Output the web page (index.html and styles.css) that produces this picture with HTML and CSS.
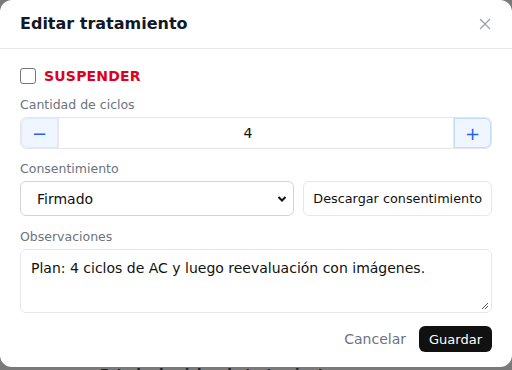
FILE: index.html
```html
<!DOCTYPE html>
<html lang="es">
<head>
<meta charset="utf-8">
<title>Editar tratamiento</title>
<link rel="stylesheet" href="styles.css">
</head>
<body>
<div class="modal">
  <div class="modal-header">
    <h2 class="modal-title">Editar tratamiento</h2>
    <button class="close" aria-label="Cerrar">
      <svg width="12" height="12" viewBox="0 0 12 12"><path d="M1.5 1.5 L10.5 10.5 M10.5 1.5 L1.5 10.5" stroke="#9ca3af" stroke-width="1.4" stroke-linecap="round"/></svg>
    </button>
  </div>
  <div class="modal-body">
    <label class="check-row">
      <span class="checkbox"></span>
      <span class="check-label">SUSPENDER</span>
    </label>
    <div class="field">
      <div class="label">Cantidad de ciclos</div>
      <div class="stepper">
        <button class="step minus">−</button>
        <div class="step-value">4</div>
        <button class="step plus">+</button>
      </div>
    </div>
    <div class="field">
      <div class="label">Consentimiento</div>
      <div class="row">
        <div class="select">
          <span>Firmado</span>
          <svg width="10" height="8" viewBox="0 0 10 8"><path d="M1.5 2 L5 5.5 L8.5 2" stroke="#111" stroke-width="2" fill="none"/></svg>
        </div>
        <button class="btn-outline">Descargar consentimiento</button>
      </div>
    </div>
    <div class="field obs">
      <div class="label">Observaciones</div>
      <div class="textarea">
        Plan: 4 ciclos de AC y luego reevaluación con imágenes.
        <svg class="grip" width="8" height="8" viewBox="0 0 8 8"><path d="M7 1 L1 7 M7 4 L4 7" stroke="#555" stroke-width="1"/></svg>
      </div>
    </div>
    <div class="footer">
      <button class="btn-link">Cancelar</button>
      <button class="btn-dark">Guardar</button>
    </div>
  </div>
</div>
<div class="behind">Estado de ciclos de tratamiento</div>
</body>
</html>
```
FILE: styles.css
```css
* { box-sizing: border-box; }
html, body { margin: 0; padding: 0; }
body {
  background: #7a7a7a;
  font-family: "DejaVu Sans", "Noto Sans", sans-serif;
  color: #111827;
  height: 370px;
  overflow: hidden;
}
.modal {
  background: #fff;
  border-radius: 12px;
  height: 367px;
  width: 512px;
}
.modal-header {
  height: 49px;
  border-bottom: 1px solid #e5e7eb;
  display: flex;
  align-items: center;
  justify-content: space-between;
  padding: 0 21px 2px 20px;
}
.modal-title {
  margin: 0;
  font-size: 16px;
  font-weight: bold;
  color: #111827;
}
.close {
  border: none;
  background: none;
  padding: 0;
  display: flex;
  margin-top: 2px;
}
.modal-body {
  padding: 17px 20px 0 20px;
}
.check-row {
  display: flex;
  align-items: center;
  gap: 8px;
  height: 19px;
}
.checkbox {
  width: 16px;
  height: 16px;
  border: 1.5px solid #767676;
  border-radius: 3px;
  background: #fff;
}
.check-label {
  color: #e0001b;
  font-weight: bold;
  font-size: 14px;
  letter-spacing: 0.2px;
}
.field { margin-top: 11px; }
.field.obs { margin-top: 12px; }
.label {
  font-size: 12.5px;
  color: #6b7280;
  line-height: 17px;
  margin-bottom: 4px;
}
.stepper {
  display: flex;
  height: 32px;
  border: 1px solid #e5e7eb;
  border-radius: 6px;
  overflow: hidden;
}
.step {
  width: 38px;
  border: none;
  background: #eff6ff;
  color: #2563eb;
  font-size: 18px;
  font-family: "DejaVu Sans", sans-serif;
  padding: 0;
}
.minus { border-right: 1px solid #e5e7eb; border-radius: 6px 0 0 6px; box-shadow: inset 0 0 0 1px #dbeafe; }
.plus { border-left: 1px solid #e5e7eb; border-radius: 0 6px 6px 0; box-shadow: inset 0 0 0 1px #bfdbfe; }
.step-value {
  flex: 1;
  display: flex;
  align-items: center;
  justify-content: center;
  padding-right: 16px;
  font-size: 14px;
  color: #111;
}
.row {
  display: flex;
  gap: 9px;
}
.select {
  flex: 1;
  height: 35px;
  border: 1px solid #d1d5db;
  border-radius: 6px;
  display: flex;
  align-items: center;
  justify-content: space-between;
  padding: 0 6px 0 16px;
  font-size: 14px;
  color: #111;
}
.btn-outline {
  height: 35px;
  border: 1px solid #e5e7eb;
  border-radius: 6px;
  background: #fff;
  font-family: "DejaVu Sans", sans-serif;
  font-size: 12.8px;
  color: #111;
  padding: 0 9px;
  white-space: nowrap;
}
.textarea {
  position: relative;
  height: 64px;
  border: 1px solid #e5e7eb;
  border-radius: 6px;
  padding: 10px 10px;
  font-size: 14px;
  color: #111;
}
.grip { position: absolute; right: 2px; bottom: 2px; }
.footer {
  display: flex;
  justify-content: flex-end;
  align-items: center;
  gap: 13px;
  margin-top: 13px;
}
.btn-link {
  border: none;
  background: none;
  font-family: "DejaVu Sans", sans-serif;
  font-size: 14px;
  color: #6b7280;
  padding: 0;
}
.btn-dark {
  height: 26px;
  background: #111;
  color: #fff;
  border: none;
  border-radius: 6px;
  font-family: "DejaVu Sans", sans-serif;
  font-size: 13px;
  padding: 0 10px;
}
.behind {
  padding-left: 100px;
  font-size: 13px;
  font-weight: bold;
  color: #1f1f1f;
  line-height: 13px;
  height: 3px;
  overflow: hidden;
}
```
